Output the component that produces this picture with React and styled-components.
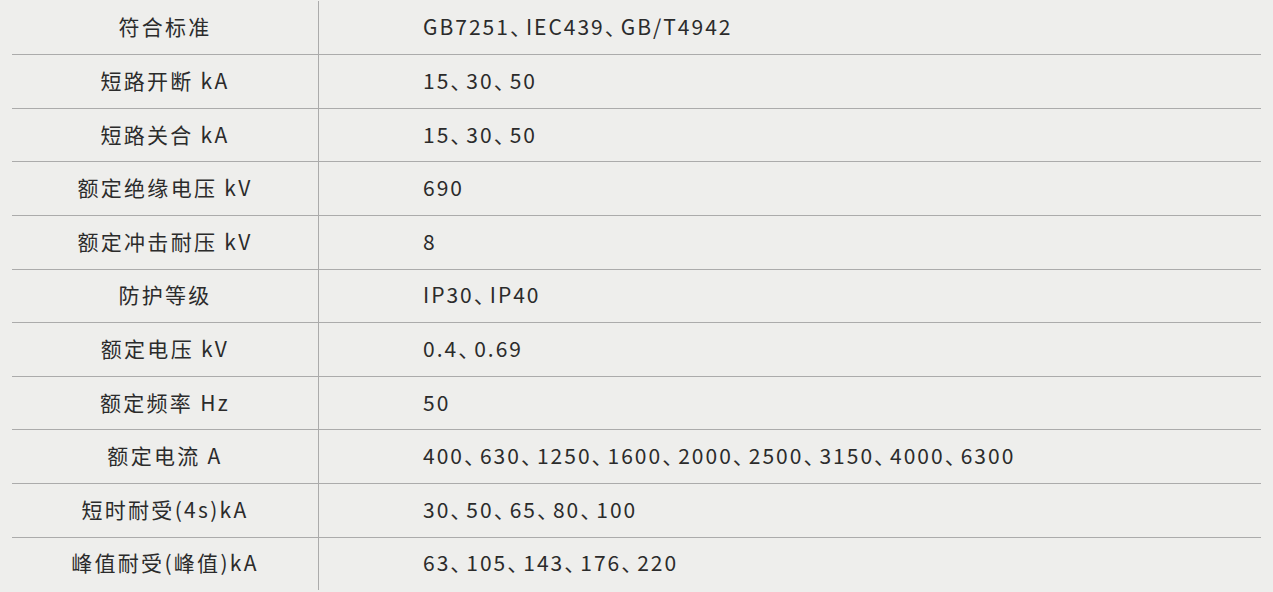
import React from 'react';
import styled, {createGlobalStyle} from 'styled-components';

const GlobalStyle = createGlobalStyle`
  html, body {
    margin: 0;
    padding: 0;
    background: #eeeeec;
  }
  body {
    font-family: "Noto Sans CJK SC", "Noto Sans", sans-serif;
    color: #2b2b2b;
  }
`;

const Table = styled.div`
  padding: 0.6px 12px 0;
`;

const Row = styled.div`
  display: grid;
  grid-template-columns: 307px 1fr;
  height: 53.6px;
  box-sizing: border-box;
  border-top: ${props => props.first ? 'none' : '1px solid #ababab'};
`;

const Label = styled.div`
  display: flex;
  align-items: center;
  justify-content: center;
  padding-bottom: 3px;
  border-right: 1px solid #ababab;
  font-size: 21px;
  letter-spacing: 2.3px;
  white-space: nowrap;
`;

const Value = styled.div`
  display: flex;
  align-items: center;
  padding-left: 104px;
  padding-bottom: 3px;
  font-size: 21px;
  letter-spacing: 2px;
  white-space: nowrap;
`;

const Sep = styled.span`
  font-feature-settings: "halt";
  padding-right: 3.5px;
`;

const rows = [
    ['符合标准', 'GB7251、IEC439、GB/T4942'],
    ['短路开断 kA', '15、30、50'],
    ['短路关合 kA', '15、30、50'],
    ['额定绝缘电压 kV', '690'],
    ['额定冲击耐压 kV', '8'],
    ['防护等级', 'IP30、IP40'],
    ['额定电压 kV', '0.4、0.69'],
    ['额定频率 Hz', '50'],
    ['额定电流 A', '400、630、1250、1600、2000、2500、3150、4000、6300'],
    ['短时耐受(4s)kA', '30、50、65、80、100'],
    ['峰值耐受(峰值)kA', '63、105、143、176、220'],
];

function renderValue(text) {
    const parts = text.split('、');
    return parts.map((p, i) => (
        <React.Fragment key={i}>
            {p}
            {i < parts.length - 1 ? <Sep>、</Sep> : null}
        </React.Fragment>
    ));
}

class App extends React.Component {
    render() {
        return (
            <Table>
                <GlobalStyle/>
                {rows.map((r, i) => (
                    <Row key={i} first={i === 0}>
                        <Label>{r[0]}</Label>
                        <Value>{renderValue(r[1])}</Value>
                    </Row>
                ))}
            </Table>
        );
    }
}

export default App;
